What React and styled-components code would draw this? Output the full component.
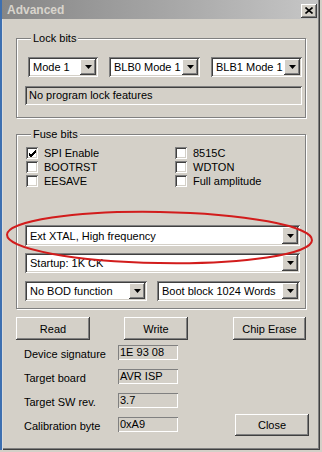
import styled, { createGlobalStyle } from "styled-components";

const GlobalStyle = createGlobalStyle`
  body {
    margin: 0;
    background: #d4d0c8;
    font-family: "Liberation Sans", Arial, sans-serif;
    font-size: 11px;
    color: #000;
  }
`;

function Arrow() {
  return (
    <svg width="7" height="4" viewBox="0 0 7 4">
      <path d="M0 0h7L3.5 4z" fill="#000" />
    </svg>
  );
}

function Combo({ label, width, height = 20 }) {
  return (
    <StyledCombo $w={width} $h={height}>
      <ComboText>{label}</ComboText>
      <ArrowButton>
        <Arrow />
      </ArrowButton>
    </StyledCombo>
  );
}

function Check({ label, checked }) {
  return (
    <CheckRow>
      <CheckBox>
        {checked && (
          <svg width="9" height="9" viewBox="0 0 9 9">
            <path d="M1 4l2 2 5-5M1 5l2 2 5-5M1 6l2 2 5-5" stroke="#000" strokeWidth="1" fill="none" />
          </svg>
        )}
      </CheckBox>
      <span>{label}</span>
    </CheckRow>
  );
}

export default function App() {
  return (
    <>
      <GlobalStyle />
      <Frame>
        <TitleBar>
          <Title>Advanced</Title>
          <CloseBox>
            <svg width="8" height="7" viewBox="0 0 8 7">
              <path d="M0.5 0.5l7 6M7.5 0.5l-7 6" stroke="#000" strokeWidth="1.6" />
            </svg>
          </CloseBox>
        </TitleBar>
        <Body>
          <Group $pb={12}>
            <Legend>Lock bits</Legend>
            <ComboRow>
              <Combo label="Mode 1" width={70} />
              <Combo label="BLB0 Mode 1" width={91} />
              <Combo label="BLB1 Mode 1" width={91} />
            </ComboRow>
            <StatusField>No program lock features</StatusField>
          </Group>

          <Group $mt={10} $pt={5} $pb={7}>
            <Legend>Fuse bits</Legend>
            <CheckGrid>
              <Check label="SPI Enable" checked />
              <Check label="8515C" />
              <Check label="BOOTRST" />
              <Check label="WDTON" />
              <Check label="EESAVE" />
              <Check label="Full amplitude" />
            </CheckGrid>
            <FuseCombos>
              <Combo label="Ext XTAL, High frequency" width={275} height={21} />
              <Combo label="Startup: 1K CK" width={275} />
              <SplitRow>
                <Combo label="No BOD function" width={122} />
                <Combo label="Boot block 1024 Words" width={143} />
              </SplitRow>
            </FuseCombos>
          </Group>

          <ButtonRow>
            <Button $w={75}>Read</Button>
            <Button $w={65} $ml={34}>Write</Button>
            <Button $w={74} $ml={45}>Chip Erase</Button>
          </ButtonRow>

          <InfoGrid>
            <InfoLabel>Device signature</InfoLabel>
            <InfoField>1E 93 08</InfoField>
            <InfoLabel>Target board</InfoLabel>
            <InfoField>AVR ISP</InfoField>
            <InfoLabel>Target SW rev.</InfoLabel>
            <InfoField>3.7</InfoField>
            <InfoLabel>Calibration byte</InfoLabel>
            <InfoField>0xA9</InfoField>
            <CloseButton $w={74}>Close</CloseButton>
          </InfoGrid>
        </Body>

        <Marker width="322" height="452" viewBox="0 0 322 452">
          <ellipse
            cx="159.5"
            cy="237.5"
            rx="152.5"
            ry="25.5"
            transform="rotate(1 159.5 237.5)"
            fill="none"
            stroke="#d21c1c"
            strokeWidth="2"
          />
        </Marker>
      </Frame>
    </>
  );
}

const Frame = styled.div`
  position: relative;
  width: 320px;
  height: 450px;
  box-sizing: border-box;
  border-left: 2px solid #3d6fb0;
  background: #d4d0c8;
  box-shadow: inset 1px 0 #dcdcdc, inset -1px -1px #404040, inset -2px -2px #808080;
  display: flex;
  flex-direction: column;
  overflow: hidden;
`;

const TitleBar = styled.div`
  height: 19px;
  margin: 0 2px 0 0;
  display: flex;
  align-items: center;
  justify-content: space-between;
  padding: 0 1px 0 5px;
  background: linear-gradient(90deg, #868686 0%, #a8a8a8 55%, #c6c6c6 100%);
`;

const Title = styled.span`
  font-size: 12px;
  font-weight: bold;
  color: #d8d4cc;
`;

const CloseBox = styled.div`
  width: 16px;
  height: 14px;
  margin-top: 2px;
  display: flex;
  align-items: center;
  justify-content: center;
  background: #d4d0c8;
  box-shadow: inset -1px -1px #404040, inset 1px 1px #fff, inset -2px -2px #808080;
`;

const Body = styled.div`
  padding: 13px 14px 0 14px;
  display: flex;
  flex-direction: column;
`;

const Group = styled.fieldset`
  margin: ${(p) => p.$mt || 0}px 0 0 0;
  padding: ${(p) => p.$pt ?? 12}px 5px ${(p) => p.$pb}px 8px;
  border: 1px solid #808080;
  box-shadow: inset 1px 1px #fff, 1px 1px #fff;
  min-width: 0;
`;

const Legend = styled.legend`
  padding: 0 2px;
  margin-left: 6px;
  line-height: 13px;
  background: #d4d0c8;
  position: relative;
`;

const ComboRow = styled.div`
  display: flex;
  justify-content: space-between;
  margin-left: 3px;
  width: 274px;
`;

const StyledCombo = styled.div`
  width: ${(p) => p.$w}px;
  height: ${(p) => p.$h}px;
  box-sizing: border-box;
  background: #fff;
  box-shadow: inset 1px 1px #808080, inset -1px -1px #fff, inset 2px 2px #404040, inset -2px -2px #d4d0c8;
  display: flex;
  align-items: center;
  padding: 2px;
`;

const ComboText = styled.span`
  flex: 1;
  padding-left: 3px;
  white-space: nowrap;
  overflow: hidden;
`;

const ArrowButton = styled.div`
  width: 16px;
  height: 100%;
  display: flex;
  align-items: center;
  justify-content: center;
  background: #d4d0c8;
  box-shadow: inset -1px -1px #404040, inset 1px 1px #fff, inset -2px -2px #808080;
`;

const StatusField = styled.div`
  margin-top: 9px;
  height: 19px;
  box-sizing: border-box;
  padding: 3px 4px;
  width: 277px;
  box-shadow: inset 1px 1px #808080, inset -1px -1px #fff, inset 2px 2px #404040, inset -2px -2px #d4d0c8;
`;

const CheckGrid = styled.div`
  display: grid;
  grid-template-columns: 149px 1fr;
  grid-auto-rows: 14px;
  margin-left: 1px;
`;

const CheckRow = styled.div`
  display: flex;
  align-items: center;
  gap: 6px;
`;

const CheckBox = styled.div`
  width: 12px;
  height: 12px;
  background: #fff;
  display: flex;
  align-items: center;
  justify-content: center;
  box-shadow: inset 1px 1px #808080, inset -1px -1px #fff, inset 2px 2px #404040, inset -2px -2px #d4d0c8;
`;

const FuseCombos = styled.div`
  margin-top: 37px;
  display: flex;
  flex-direction: column;
  gap: 7px;
`;

const SplitRow = styled.div`
  display: flex;
  justify-content: space-between;
  width: 275px;
  margin-top: 1px;
`;

const ButtonRow = styled.div`
  display: flex;
  margin-top: 8px;
`;

const Button = styled.div`
  width: ${(p) => p.$w}px;
  height: 23px;
  margin-left: ${(p) => p.$ml || 0}px;
  box-sizing: border-box;
  display: flex;
  align-items: center;
  justify-content: center;
  font-size: 11px;
  background: #d4d0c8;
  box-shadow: inset -1px -1px #404040, inset 1px 1px #fff, inset -2px -2px #808080;
`;

const InfoGrid = styled.div`
  display: grid;
  grid-template-columns: 94px 60px 1fr;
  grid-template-rows: repeat(4, 15px);
  row-gap: 9px;
  margin: 5px 0 0 8px;
`;

const InfoLabel = styled.div`
  grid-column: 1;
  line-height: 15px;
  transform: translateY(2px);
`;

const InfoField = styled.div`
  grid-column: 2;
  box-sizing: border-box;
  padding: 0 2px;
  line-height: 14px;
  box-shadow: inset 1px 1px #808080, inset -1px -1px #fff;
`;

const CloseButton = styled(Button)`
  grid-column: 3;
  grid-row: 4;
  justify-self: end;
  align-self: center;
  height: 22px;
  margin-right: -3px;
`;

const Marker = styled.svg`
  position: absolute;
  left: -2px;
  top: 0;
  pointer-events: none;
`;
